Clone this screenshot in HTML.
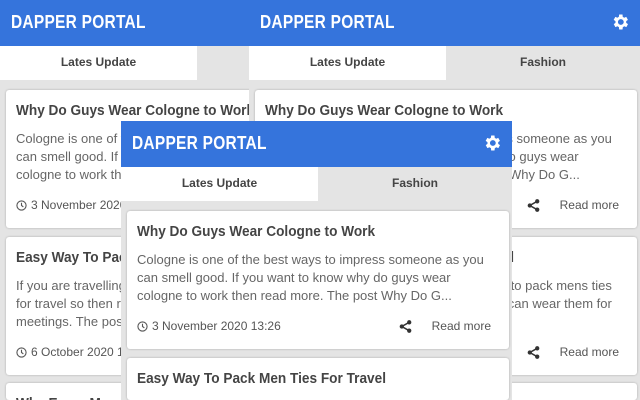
<!DOCTYPE html>
<html><head><meta charset="utf-8"><style>
*{margin:0;padding:0;box-sizing:border-box}
body{width:640px;height:400px;overflow:hidden;background:#e4e4e4;position:relative;font-family:"Liberation Sans",sans-serif;color:#444}
.p{position:absolute;width:391px;height:400px;background:#e4e4e4;overflow:hidden}
.h{height:46px;background:#3574dc;position:relative}
.h b{position:absolute;left:11px;top:12px;color:#fff;font-size:18px;font-weight:bold;letter-spacing:0.3px;transform:scaleX(0.86);transform-origin:0 0;white-space:nowrap}
.g{position:absolute;right:10px;top:12px;width:20px;height:20px}
.t{height:34px;display:flex;font-size:12px;font-weight:bold;color:#444}
.t div{width:197px;background:#fff;text-align:center;line-height:33px}
.t div+div{flex:1;background:#e4e4e4}
.c{position:absolute;left:6px;width:382px;height:138px;background:#fff;border-radius:3px;box-shadow:0 0 2px rgba(0,0,0,.25);padding:0 10px}
.c h3{font-size:14.5px;margin-top:13px;color:#444;white-space:nowrap;transform:scaleX(0.94);transform-origin:0 0}
.c p{font-size:13px;line-height:18px;margin-top:11px;color:#666;height:54px;overflow:hidden}
.f{position:absolute;left:10px;right:18px;top:108px;font-size:12px;color:#555;display:flex;align-items:center}
.f span.d{flex:1}
.f .s{margin-right:20px}
</style></head><body>
<svg width="0" height="0" style="position:absolute"><defs>
<symbol id="gear" viewBox="0 0 24 24"><path fill="#fff" d="M19.4 13a7.5 7.5 0 0 0 0-2l2.1-1.6-2-3.5-2.5 1a7.4 7.4 0 0 0-1.7-1L15 3h-4l-.4 2.9a7.4 7.4 0 0 0-1.7 1l-2.5-1-2 3.5L6.6 11a7.5 7.5 0 0 0 0 2l-2.1 1.6 2 3.5 2.5-1a7.4 7.4 0 0 0 1.7 1L11 21h4l.4-2.9a7.4 7.4 0 0 0 1.7-1l2.5 1 2-3.5zM13 15.5a3.5 3.5 0 1 1 0-7 3.5 3.5 0 0 1 0 7z"/></symbol>
<symbol id="clk" viewBox="0 0 12 12"><circle cx="6" cy="6" r="5" fill="none" stroke="#555" stroke-width="1.2"/><path d="M6 3v3l2 1.5" fill="none" stroke="#555" stroke-width="1.2"/></symbol>
<symbol id="sh" viewBox="0 0 14 14"><circle cx="11" cy="2.5" r="2.3" fill="#333"/><circle cx="3" cy="7" r="2.3" fill="#333"/><circle cx="11" cy="11.5" r="2.3" fill="#333"/><path d="M11 2.5L3 7l8 4.5" stroke="#333" stroke-width="1.6" fill="none"/></symbol>
</defs></svg>

<div class="p" style="left:0;top:0">
<div class="h"><b>DAPPER PORTAL</b></div>
<div class="t"><div>Lates Update</div><div>Fashion</div></div>
<div class="c" style="top:90px"><h3>Why Do Guys Wear Cologne to Work</h3><p>Cologne is one of the best ways to impress someone as you can smell good. If you want to know why do guys wear cologne to work then read more. The post Why Do G...</p><div class="f"><svg width="11" height="11" style="margin-right:4px"><use href="#clk"/></svg><span class="d">3 November 2020 13:26</span><svg class="s" width="13" height="13"><use href="#sh"/></svg><span>Read more</span></div></div>
<div class="c" style="top:237px"><h3>Easy Way To Pack Men Ties For Travel</h3><p>If you are travelling and want to know how to pack mens ties for travel so then read more here and you can wear them for meetings. The post Easy Way To P...</p><div class="f"><svg width="11" height="11" style="margin-right:4px"><use href="#clk"/></svg><span class="d">6 October 2020 14:10</span><svg class="s" width="13" height="13"><use href="#sh"/></svg><span>Read more</span></div></div>
<div class="c" style="top:383px;height:17px"><h3>Why Every Man Needs A Watch</h3></div>
</div>

<div class="p" style="left:249px;top:0">
<div class="h"><b>DAPPER PORTAL</b><svg class="g"><use href="#gear"/></svg></div>
<div class="t"><div>Lates Update</div><div>Fashion</div></div>
<div class="c" style="top:90px"><h3>Why Do Guys Wear Cologne to Work</h3><p>Cologne is one of the best ways to impress someone as you can smell good. If you want to know why do guys wear cologne to work then read more. The post Why Do G...</p><div class="f"><svg width="11" height="11" style="margin-right:4px"><use href="#clk"/></svg><span class="d">3 November 2020 13:26</span><svg class="s" width="13" height="13"><use href="#sh"/></svg><span>Read more</span></div></div>
<div class="c" style="top:237px"><h3>Easy Way To Pack Men Ties For Travel</h3><p>If you are travelling and want to know how to pack mens ties for travel so then read more here and you can wear them for meetings. The post Easy Way To P...</p><div class="f"><svg width="11" height="11" style="margin-right:4px"><use href="#clk"/></svg><span class="d">6 October 2020 14:10</span><svg class="s" width="13" height="13"><use href="#sh"/></svg><span>Read more</span></div></div>
<div class="c" style="top:383px;height:17px"><h3>Why Every Man Needs A Watch</h3></div>
</div>

<div class="p" style="left:121px;top:121px;height:279px">
<div class="h"><b>DAPPER PORTAL</b><svg class="g"><use href="#gear"/></svg></div>
<div class="t"><div>Lates Update</div><div>Fashion</div></div>
<div class="c" style="top:90px"><h3>Why Do Guys Wear Cologne to Work</h3><p>Cologne is one of the best ways to impress someone as you can smell good. If you want to know why do guys wear cologne to work then read more. The post Why Do G...</p><div class="f"><svg width="11" height="11" style="margin-right:4px"><use href="#clk"/></svg><span class="d">3 November 2020 13:26</span><svg class="s" width="13" height="13"><use href="#sh"/></svg><span>Read more</span></div></div>
<div class="c" style="top:237px;height:42px"><h3>Easy Way To Pack Men Ties For Travel</h3></div>
</div>
</body></html>
